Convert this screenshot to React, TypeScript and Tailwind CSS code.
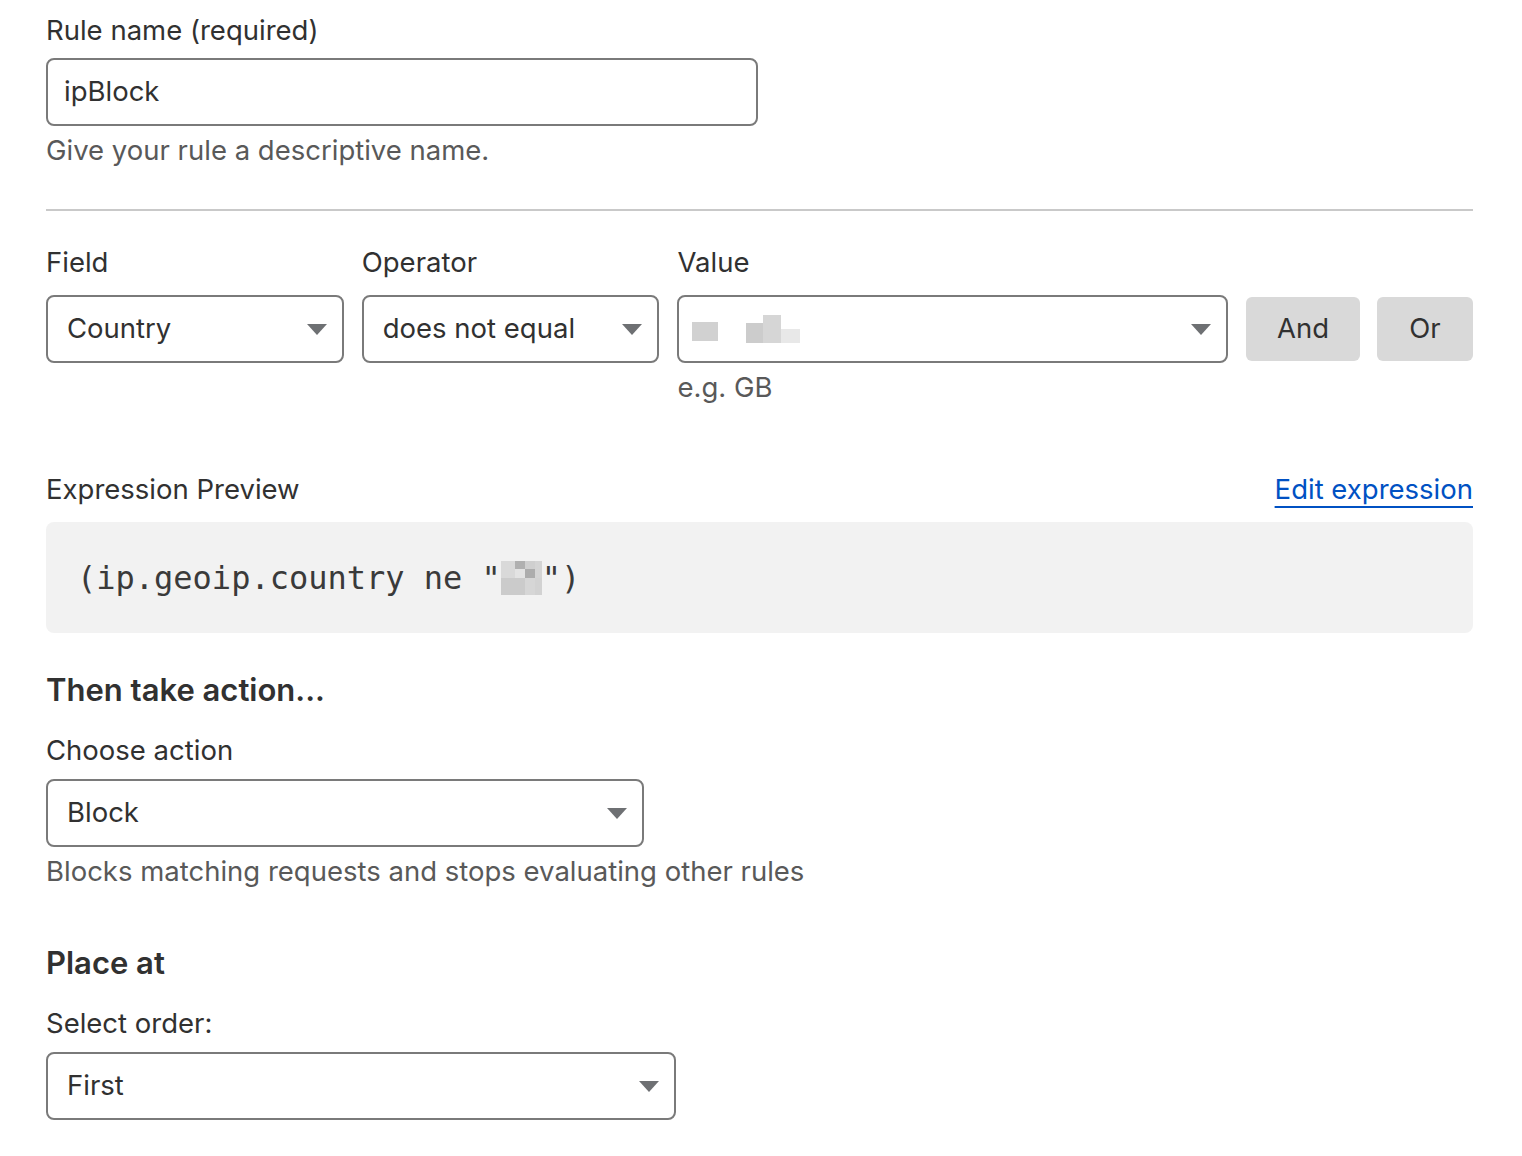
import React from 'react';

function Caret() {
  return (
    <svg width="20" height="11" viewBox="0 0 20 11" className="shrink-0">
      <path d="M0 0 H20 L10 11 Z" fill="#6e7073" />
    </svg>
  );
}

function Select({
  value,
  className,
  tight,
  children,
}: {
  value?: string;
  className?: string;
  tight?: boolean;
  children?: React.ReactNode;
}) {
  return (
    <div
      className={`h-[68px] flex items-center justify-between ${tight ? 'pl-[13px]' : 'pl-[19px]'} pr-[15px] border-2 border-[#7a7a7a] rounded-[8px] bg-white ${className ?? ''}`}
    >
      {children ?? <span className="text-[27.5px] text-[#313131]">{value}</span>}
      <Caret />
    </div>
  );
}

export default function App() {
  return (
    <div
      className="bg-white min-h-[1156px] pl-[46px] pr-[49px] pt-[12px] text-[#313131] text-[27.5px]"
      style={{ fontFamily: 'Inter, "Noto Sans", sans-serif' }}
    >
      {/* rule name */}
      <div className="leading-[36px]">Rule name (required)</div>
      <div className="mt-[10px] w-[712px] h-[68px] border-2 border-[#7a7a7a] rounded-[8px] flex items-center pl-[16px]">
        ipBlock
      </div>
      <div className="mt-[6px] leading-[36px] text-[#595959]">Give your rule a descriptive name.</div>

      <div className="mt-[41px] h-[2px] bg-[#c9c9c9]" />

      {/* field / operator / value */}
      <div className="mt-[33px] flex gap-[18px]">
        <div className="w-[298px]">
          <div className="leading-[36px]">Field</div>
          <Select className="mt-[15px]" value="Country" />
        </div>
        <div className="w-[298px]">
          <div className="leading-[36px]">Operator</div>
          <Select className="mt-[15px]" value="does not equal" />
        </div>
        <div className="w-[551px]">
          <div className="leading-[36px]">Value</div>
          <Select className="mt-[15px]" tight>
            <div className="flex items-end h-[28px]">
              <div className="w-[26px] h-[19px] bg-[#d1d1d1] mb-[2px]" />
              <div className="ml-[28px] w-[17px] h-[20px] bg-[#cccccc]" />
              <div className="w-[18px] h-[28px] bg-[#d6d6d6]" />
              <div className="w-[19px] h-[14px] bg-[#e8e8e8]" />
            </div>
          </Select>
          <div className="mt-[6px] leading-[36px] text-[#595959]">e.g. GB</div>
        </div>
        <div className="flex gap-[17px] mt-[53px] h-[64px]">
          <button className="w-[114px] h-[64px] rounded-[6px] bg-[#d9d9d9] text-[#313131]">And</button>
          <button className="w-[96px] h-[64px] rounded-[6px] bg-[#d9d9d9] text-[#313131]">Or</button>
        </div>
      </div>

      {/* expression preview */}
      <div className="mt-[66px] flex items-end justify-between">
        <div className="leading-[36px]">Expression Preview</div>
        <a className="leading-[36px] text-[#0051c3] underline decoration-2 underline-offset-[7px]">
          Edit expression
        </a>
      </div>
      <div className="mt-[15px] h-[111px] bg-[#f2f2f2] rounded-[8px] flex items-center pl-[31px]">
        <span
          className="text-[32px] text-[#3a3a3a] flex items-center whitespace-pre"
          style={{ fontFamily: '"DejaVu Sans Mono", monospace' }}
        >
          {'(ip.geoip.country ne "'}
          <span className="inline-grid grid-cols-[14px_10px_10px_7px] grid-rows-[8px_9px_17px] w-[41px] h-[34px]">
            <span className="bg-[#d9d9d9]" />
            <span className="bg-[#b0b0b0]" />
            <span className="bg-[#cfcfcf]" />
            <span className="bg-[#d4d4d4]" />
            <span className="bg-[#d9d9d9]" />
            <span className="bg-[#e3e3e3]" />
            <span className="bg-[#acacac]" />
            <span className="bg-[#d4d4d4]" />
            <span className="bg-[#cbcbcb]" />
            <span className="bg-[#cbcbcb]" />
            <span className="bg-[#d6d6d6]" />
            <span className="bg-[#d2d2d2]" />
          </span>
          {'")'}
        </span>
      </div>

      {/* action */}
      <div className="mt-[37px] text-[31px] leading-[40px] font-semibold">Then take action...</div>
      <div className="mt-[22px] leading-[36px]">Choose action</div>
      <Select className="mt-[11px] w-[598px]" value="Block" />
      <div className="mt-[6px] leading-[36px] text-[#595959]">
        Blocks matching requests and stops evaluating other rules
      </div>

      {/* place at */}
      <div className="mt-[54px] text-[31px] leading-[40px] font-semibold">Place at</div>
      <div className="mt-[22px] leading-[36px]">Select order:</div>
      <Select className="mt-[11px] w-[630px]" value="First" />
    </div>
  );
}
